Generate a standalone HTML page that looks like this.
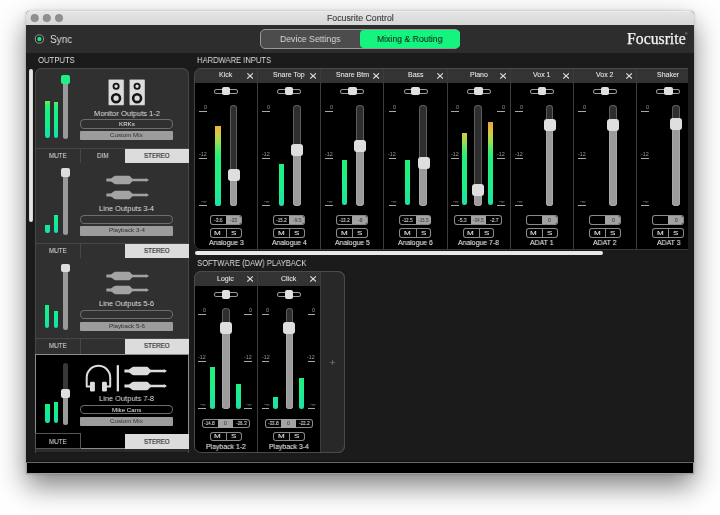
<!DOCTYPE html>
<html><head><meta charset="utf-8"><style>
html,body{margin:0;padding:0;}
body{width:720px;height:515px;position:relative;overflow:hidden;background:#fff;font-family:"Liberation Sans",sans-serif;}
div{position:absolute;box-sizing:border-box;}
.t{white-space:nowrap;will-change:transform;transform-origin:0 0;}
svg{position:absolute;}
</style></head><body>
<div style="left:26.00px;top:11.00px;width:668.00px;height:463.00px;box-shadow:0 12px 28px rgba(0,0,0,0.5), 0 0 3px rgba(0,0,0,0.22);border-radius:4px 4px 0 0;background:#1b1b1b"></div>
<div style="left:26.00px;top:11.00px;width:668.00px;height:13.60px;background:linear-gradient(#f2f2f2 0px,#e4e4e4 1.2px,#d7d7d7 13.6px);border-radius:4px 4px 0 0"></div>
<svg style="left:26px;top:11px" width="50" height="14" viewBox="26 11 50 14"><circle cx="34.7" cy="18.1" r="3.75" fill="#8f8f8f" stroke="#7d7d7d" stroke-width="0.5"/><circle cx="46.8" cy="18.1" r="3.75" fill="#8f8f8f" stroke="#7d7d7d" stroke-width="0.5"/><circle cx="59.0" cy="18.1" r="3.75" fill="#8f8f8f" stroke="#7d7d7d" stroke-width="0.5"/></svg>
<div class="t" style="left:326.80px;top:15.00px;font-size:8.276px;line-height:8.276px;color:#3c3c3c;font-family:'Liberation Sans';transform:scaleX(1.0602);-webkit-text-stroke-width:0.12px">Focusrite Control</div>
<div style="left:26.00px;top:25.00px;width:668.00px;height:27.50px;background:#2d2d2d"></div>
<svg style="left:30px;top:30px" width="20" height="18" viewBox="30 30 20 18"><circle cx="39.4" cy="39" r="4.1" fill="#1c1c1c" stroke="#a8a8a8" stroke-width="0.9"/><circle cx="39.4" cy="39" r="2.2" fill="#1fe47c"/></svg>
<div class="t" style="left:49.75px;top:35.00px;font-size:10.286px;line-height:10.286px;color:#dcdcdc;font-family:'Liberation Sans';transform:scaleX(0.9745);">Sync</div>
<div style="left:260.30px;top:28.90px;width:199.90px;height:20.40px;border-radius:5px;background:#4c4c4c;border:1.1px solid #989898"></div>
<div style="left:360.20px;top:29.70px;width:99.80px;height:18.70px;border-radius:4px;background:#15f47e"></div>
<div class="t" style="left:279.80px;top:35.00px;font-size:9.241px;line-height:9.241px;color:#d8d8d8;font-family:'Liberation Sans';transform:scaleX(0.9420);">Device Settings</div>
<div class="t" style="left:376.81px;top:35.00px;font-size:9.241px;line-height:9.241px;color:#101010;font-family:'Liberation Sans';transform:scaleX(0.9369);">Mixing &amp; Routing</div>
<div class="t" style="left:626.53px;top:31.00px;font-size:15.758px;line-height:15.758px;color:#f4f4f4;font-family:'Liberation Serif';transform:scaleX(0.9987);-webkit-text-stroke:0.25px #f4f4f4">Focusrite</div>
<div class="t" style="left:685.4px;top:33.2px;font-size:3.5px;line-height:3.5px;color:#bbb">&#174;</div>
<div style="left:26.00px;top:52.50px;width:668.00px;height:409.00px;background:#1b1b1b"></div>
<div style="left:26.00px;top:460.60px;width:668.00px;height:0.90px;background:#121212"></div>
<div style="left:26.00px;top:461.50px;width:668.00px;height:1.20px;background:#6a6a6a"></div>
<div style="left:26.00px;top:462.70px;width:668.00px;height:11.80px;background:#000;border:1px solid #a0a0a0;border-top:0"></div>
<div class="t" style="left:37.85px;top:55.00px;font-size:9.571px;line-height:9.571px;color:#dedede;font-family:'Liberation Sans';transform:scaleX(0.8050);">OUTPUTS</div>
<div class="t" style="left:196.79px;top:56.00px;font-size:8.857px;line-height:8.857px;color:#dedede;font-family:'Liberation Sans';transform:scaleX(0.8607);">HARDWARE INPUTS</div>
<div class="t" style="left:196.66px;top:259.00px;font-size:9.310px;line-height:9.310px;color:#dedede;font-family:'Liberation Sans';transform:scaleX(0.8205);">SOFTWARE (DAW) PLAYBACK</div>
<div style="left:29.00px;top:68.70px;width:3.60px;height:153.30px;background:linear-gradient(90deg,#cfcfcf,#eeeeee 50%,#cfcfcf);border-radius:2px"></div>
<div style="left:35.30px;top:68.00px;width:153.70px;height:95.20px;background:#303030;box-shadow:inset 1px 0 0 #474747, inset -1px 0 0 #474747, inset 0 1px 0 #474747;border-radius:7px 7px 0 0;"></div>
<div style="left:63.00px;top:79.00px;width:5.40px;height:60.30px;background:#9a9a9a;border-radius:2.7px"></div>
<div style="left:61.00px;top:75.00px;width:9.00px;height:8.80px;background:#20ee88;border-radius:2px"></div>
<div style="left:45.00px;top:101.00px;width:4.6px;height:36.60px;overflow:hidden;border-radius:0 0 2.3px 2.3px"><div style="left:0;top:0.00px;width:4.6px;height:36.6px;background:linear-gradient(#72ee56 0px,#30f070 4px,#18f082 10px,#14f08a 22px,#16dfb2 36.6px)"></div></div>
<div style="left:53.90px;top:101.80px;width:4.6px;height:35.80px;overflow:hidden;border-radius:0 0 2.3px 2.3px"><div style="left:0;top:-0.80px;width:4.6px;height:36.6px;background:linear-gradient(#72ee56 0px,#30f070 4px,#18f082 10px,#14f08a 22px,#16dfb2 36.6px)"></div></div>
<svg style="left:108.40px;top:78.9px" width="16.4" height="26.7" viewBox="0 0 16.4 26.7"><rect x="0.25" y="0.25" width="15.9" height="26.2" rx="1.2" fill="#dcdcdc" stroke="#222" stroke-width="0.5"/><circle cx="8.1" cy="7.3" r="2.6" fill="#dcdcdc" stroke="#151515" stroke-width="1.85"/><circle cx="8.1" cy="19.2" r="3.95" fill="#dcdcdc" stroke="#151515" stroke-width="2.6"/></svg>
<svg style="left:128.60px;top:78.9px" width="16.4" height="26.7" viewBox="0 0 16.4 26.7"><rect x="0.25" y="0.25" width="15.9" height="26.2" rx="1.2" fill="#dcdcdc" stroke="#222" stroke-width="0.5"/><circle cx="8.1" cy="7.3" r="2.6" fill="#dcdcdc" stroke="#151515" stroke-width="1.85"/><circle cx="8.1" cy="19.2" r="3.95" fill="#dcdcdc" stroke="#151515" stroke-width="2.6"/></svg>
<div class="t" style="left:93.65px;top:110.00px;font-size:7.724px;line-height:7.724px;color:#e0e0e0;font-family:'Liberation Sans';transform:scaleX(0.9652);">Monitor Outputs 1-2</div>
<div style="left:80.30px;top:119.40px;width:92.60px;height:9.20px;border-radius:4.6px;box-shadow:inset 0 0 0 1px #6d6d6d"></div>
<div class="t" style="left:118.61px;top:121.00px;font-size:6.069px;line-height:6.069px;color:#e8e8e8;font-family:'Liberation Sans';transform:scaleX(1.0259);">KRKs</div>
<div style="left:80.30px;top:131.10px;width:92.60px;height:9.30px;background:#9c9c9c;border-radius:1px"></div>
<div class="t" style="left:110.24px;top:132.00px;font-size:6.069px;line-height:6.069px;color:#303030;font-family:'Liberation Sans';transform:scaleX(1.0259);">Custom Mix</div>
<div style="left:35.30px;top:147.60px;width:153.70px;height:1.00px;background:#474747"></div>
<div style="left:80.40px;top:147.60px;width:1.00px;height:15.50px;background:#474747"></div>
<div style="left:125.30px;top:147.60px;width:1.00px;height:15.50px;background:#474747"></div>
<div style="left:35.30px;top:163.10px;width:153.70px;height:1.00px;background:#474747"></div>
<div style="left:125.30px;top:148.60px;width:63.70px;height:14.50px;background:#dcdcdc"></div>
<div class="t" style="left:48.50px;top:152.00px;font-size:7.246px;line-height:7.246px;color:#e2e2e2;font-family:'Liberation Sans';transform:scaleX(0.8657);">MUTE</div>
<div class="t" style="left:96.96px;top:152.00px;font-size:7.246px;line-height:7.246px;color:#e2e2e2;font-family:'Liberation Sans';transform:scaleX(0.8657);">DIM</div>
<div class="t" style="left:143.81px;top:152.00px;font-size:7.246px;line-height:7.246px;color:#1a1a1a;font-family:'Liberation Sans';transform:scaleX(0.8657);-webkit-text-stroke:0.12px #1a1a1a">STEREO</div>
<div style="left:35.30px;top:163.20px;width:153.70px;height:95.20px;background:#303030;box-shadow:inset 1px 0 0 #474747, inset -1px 0 0 #474747;"></div>
<div style="left:63.00px;top:171.00px;width:5.40px;height:63.80px;background:#9a9a9a;border-radius:2.7px"></div>
<div style="left:61.00px;top:168.00px;width:9.00px;height:8.80px;background:#dedede;border-radius:2px"></div>
<div style="left:45.00px;top:225.00px;width:4.6px;height:7.80px;overflow:hidden;border-radius:0 0 2.3px 2.3px"><div style="left:0;top:-28.80px;width:4.6px;height:36.6px;background:linear-gradient(#72ee56 0px,#30f070 4px,#18f082 10px,#14f08a 22px,#16dfb2 36.6px)"></div></div>
<div style="left:53.90px;top:214.70px;width:4.6px;height:18.10px;overflow:hidden;border-radius:0 0 2.3px 2.3px"><div style="left:0;top:-18.50px;width:4.6px;height:36.6px;background:linear-gradient(#72ee56 0px,#30f070 4px,#18f082 10px,#14f08a 22px,#16dfb2 36.6px)"></div></div>
<svg style="left:105.60px;top:175.30px" width="44" height="10" viewBox="0 0 44 10"><path fill="#a3a3a3" d="M0.4 3.5 H4.6 C6.4 3.5 7.4 0.8 9.6 0.8 H23 C24.6 0.8 25.3 3.7 27 3.7 H39.6 L40.2 3.2 L43 5 L40.2 6.8 L39.6 6.3 H27 C25.3 6.3 24.6 9.2 23 9.2 H9.6 C7.4 9.2 6.4 6.5 4.6 6.5 H0.4 Z"/></svg>
<svg style="left:105.60px;top:190.00px" width="44" height="10" viewBox="0 0 44 10"><path fill="#a3a3a3" d="M0.4 3.5 H4.6 C6.4 3.5 7.4 0.8 9.6 0.8 H23 C24.6 0.8 25.3 3.7 27 3.7 H39.6 L40.2 3.2 L43 5 L40.2 6.8 L39.6 6.3 H27 C25.3 6.3 24.6 9.2 23 9.2 H9.6 C7.4 9.2 6.4 6.5 4.6 6.5 H0.4 Z"/></svg>
<div class="t" style="left:98.95px;top:205.00px;font-size:7.724px;line-height:7.724px;color:#e0e0e0;font-family:'Liberation Sans';transform:scaleX(0.9652);">Line Outputs 3-4</div>
<div style="left:80.30px;top:214.60px;width:92.60px;height:9.20px;border-radius:4.6px;box-shadow:inset 0 0 0 1px #6d6d6d"></div>
<div style="left:80.30px;top:226.30px;width:92.60px;height:9.30px;background:#9c9c9c;border-radius:1px"></div>
<div class="t" style="left:108.65px;top:227.00px;font-size:6.069px;line-height:6.069px;color:#303030;font-family:'Liberation Sans';transform:scaleX(1.0259);">Playback 3-4</div>
<div style="left:35.30px;top:242.80px;width:153.70px;height:1.00px;background:#474747"></div>
<div style="left:80.40px;top:242.80px;width:1.00px;height:15.50px;background:#474747"></div>
<div style="left:35.30px;top:258.30px;width:153.70px;height:1.00px;background:#474747"></div>
<div style="left:125.30px;top:243.80px;width:63.70px;height:14.50px;background:#dcdcdc"></div>
<div class="t" style="left:48.50px;top:247.00px;font-size:7.246px;line-height:7.246px;color:#e2e2e2;font-family:'Liberation Sans';transform:scaleX(0.8657);">MUTE</div>
<div class="t" style="left:143.81px;top:247.00px;font-size:7.246px;line-height:7.246px;color:#1a1a1a;font-family:'Liberation Sans';transform:scaleX(0.8657);-webkit-text-stroke:0.12px #1a1a1a">STEREO</div>
<div style="left:35.30px;top:258.40px;width:153.70px;height:95.20px;background:#303030;box-shadow:inset 1px 0 0 #474747, inset -1px 0 0 #474747;"></div>
<div style="left:63.00px;top:266.00px;width:5.40px;height:63.80px;background:#9a9a9a;border-radius:2.7px"></div>
<div style="left:61.00px;top:263.70px;width:9.00px;height:8.80px;background:#dedede;border-radius:2px"></div>
<div style="left:44.90px;top:304.80px;width:4.6px;height:23.20px;overflow:hidden;border-radius:0 0 2.3px 2.3px"><div style="left:0;top:-13.40px;width:4.6px;height:36.6px;background:linear-gradient(#72ee56 0px,#30f070 4px,#18f082 10px,#14f08a 22px,#16dfb2 36.6px)"></div></div>
<div style="left:53.90px;top:310.50px;width:4.6px;height:17.50px;overflow:hidden;border-radius:0 0 2.3px 2.3px"><div style="left:0;top:-19.10px;width:4.6px;height:36.6px;background:linear-gradient(#72ee56 0px,#30f070 4px,#18f082 10px,#14f08a 22px,#16dfb2 36.6px)"></div></div>
<svg style="left:105.60px;top:270.50px" width="44" height="10" viewBox="0 0 44 10"><path fill="#a3a3a3" d="M0.4 3.5 H4.6 C6.4 3.5 7.4 0.8 9.6 0.8 H23 C24.6 0.8 25.3 3.7 27 3.7 H39.6 L40.2 3.2 L43 5 L40.2 6.8 L39.6 6.3 H27 C25.3 6.3 24.6 9.2 23 9.2 H9.6 C7.4 9.2 6.4 6.5 4.6 6.5 H0.4 Z"/></svg>
<svg style="left:105.60px;top:285.20px" width="44" height="10" viewBox="0 0 44 10"><path fill="#a3a3a3" d="M0.4 3.5 H4.6 C6.4 3.5 7.4 0.8 9.6 0.8 H23 C24.6 0.8 25.3 3.7 27 3.7 H39.6 L40.2 3.2 L43 5 L40.2 6.8 L39.6 6.3 H27 C25.3 6.3 24.6 9.2 23 9.2 H9.6 C7.4 9.2 6.4 6.5 4.6 6.5 H0.4 Z"/></svg>
<div class="t" style="left:98.98px;top:300.00px;font-size:7.724px;line-height:7.724px;color:#e0e0e0;font-family:'Liberation Sans';transform:scaleX(0.9652);">Line Outputs 5-6</div>
<div style="left:80.30px;top:309.80px;width:92.60px;height:9.20px;border-radius:4.6px;box-shadow:inset 0 0 0 1px #6d6d6d"></div>
<div style="left:80.30px;top:321.50px;width:92.60px;height:9.30px;background:#9c9c9c;border-radius:1px"></div>
<div class="t" style="left:108.68px;top:323.00px;font-size:6.069px;line-height:6.069px;color:#303030;font-family:'Liberation Sans';transform:scaleX(1.0259);">Playback 5-6</div>
<div style="left:35.30px;top:338.00px;width:153.70px;height:1.00px;background:#474747"></div>
<div style="left:80.40px;top:338.00px;width:1.00px;height:15.50px;background:#474747"></div>
<div style="left:35.30px;top:353.50px;width:153.70px;height:1.00px;background:#474747"></div>
<div style="left:125.30px;top:339.00px;width:63.70px;height:14.50px;background:#dcdcdc"></div>
<div class="t" style="left:48.50px;top:342.00px;font-size:7.246px;line-height:7.246px;color:#e2e2e2;font-family:'Liberation Sans';transform:scaleX(0.8657);">MUTE</div>
<div class="t" style="left:143.81px;top:342.00px;font-size:7.246px;line-height:7.246px;color:#1a1a1a;font-family:'Liberation Sans';transform:scaleX(0.8657);-webkit-text-stroke:0.12px #1a1a1a">STEREO</div>
<div style="left:35.30px;top:353.80px;width:153.70px;height:94.90px;background:#000;box-shadow:inset 0 0 0 1px #8d8d8d"></div>
<div style="left:63.00px;top:362.70px;width:5.40px;height:62.60px;background:#383838;border-radius:2.7px"></div>
<div style="left:63.00px;top:393.40px;width:5.40px;height:31.90px;background:#9a9a9a;border-radius:0 0 2.7px 2.7px"></div>
<div style="left:61.00px;top:389.40px;width:9.00px;height:8.80px;background:#dedede;border-radius:2px"></div>
<div style="left:45.00px;top:404.00px;width:4.6px;height:19.40px;overflow:hidden;border-radius:0 0 2.3px 2.3px"><div style="left:0;top:-17.20px;width:4.6px;height:36.6px;background:linear-gradient(#72ee56 0px,#30f070 4px,#18f082 10px,#14f08a 22px,#16dfb2 36.6px)"></div></div>
<div style="left:53.90px;top:402.40px;width:4.6px;height:21.00px;overflow:hidden;border-radius:0 0 2.3px 2.3px"><div style="left:0;top:-15.60px;width:4.6px;height:36.6px;background:linear-gradient(#72ee56 0px,#30f070 4px,#18f082 10px,#14f08a 22px,#16dfb2 36.6px)"></div></div>
<svg style="left:80px;top:360px" width="45" height="35" viewBox="80 360 45 35"><path d="M86.7 386.4 V377.5 A11.75 11.75 0 0 1 110.2 377.5 V386.4 M86 386.4 H91 M111 386.4 H106" fill="none" stroke="#dcdcdc" stroke-width="2"/><rect x="90" y="381.7" width="4.9" height="9.9" rx="1.3" fill="#dcdcdc"/><rect x="102" y="381.7" width="4.9" height="9.9" rx="1.3" fill="#dcdcdc"/><rect x="116.7" y="365.1" width="2.3" height="26.5" rx="1" fill="#dcdcdc"/></svg>
<svg style="left:124.40px;top:366.10px" width="44" height="10" viewBox="0 0 44 10"><path fill="#dcdcdc" d="M0.4 3.5 H4.6 C6.4 3.5 7.4 0.8 9.6 0.8 H23 C24.6 0.8 25.3 3.7 27 3.7 H39.6 L40.2 3.2 L43 5 L40.2 6.8 L39.6 6.3 H27 C25.3 6.3 24.6 9.2 23 9.2 H9.6 C7.4 9.2 6.4 6.5 4.6 6.5 H0.4 Z"/></svg>
<svg style="left:124.40px;top:380.70px" width="44" height="10" viewBox="0 0 44 10"><path fill="#dcdcdc" d="M0.4 3.5 H4.6 C6.4 3.5 7.4 0.8 9.6 0.8 H23 C24.6 0.8 25.3 3.7 27 3.7 H39.6 L40.2 3.2 L43 5 L40.2 6.8 L39.6 6.3 H27 C25.3 6.3 24.6 9.2 23 9.2 H9.6 C7.4 9.2 6.4 6.5 4.6 6.5 H0.4 Z"/></svg>
<div class="t" style="left:98.98px;top:395.00px;font-size:7.724px;line-height:7.724px;color:#e0e0e0;font-family:'Liberation Sans';transform:scaleX(0.9652);">Line Outputs 7-8</div>
<div style="left:80.30px;top:405.20px;width:92.60px;height:9.20px;border-radius:4.6px;box-shadow:inset 0 0 0 1px #6d6d6d"></div>
<div class="t" style="left:111.85px;top:407.00px;font-size:6.069px;line-height:6.069px;color:#e8e8e8;font-family:'Liberation Sans';transform:scaleX(1.0259);">Mike Cans</div>
<div style="left:80.30px;top:416.90px;width:92.60px;height:9.30px;background:#9c9c9c;border-radius:1px"></div>
<div class="t" style="left:110.24px;top:418.00px;font-size:6.069px;line-height:6.069px;color:#303030;font-family:'Liberation Sans';transform:scaleX(1.0259);">Custom Mix</div>
<div style="left:35.30px;top:433.40px;width:45.50px;height:15.70px;box-shadow:inset 0 0 0 1px #555"></div>
<div style="left:125.30px;top:433.70px;width:63.70px;height:15.20px;background:#dcdcdc"></div>
<div class="t" style="left:48.50px;top:438.00px;font-size:7.246px;line-height:7.246px;color:#e2e2e2;font-family:'Liberation Sans';transform:scaleX(0.8657);">MUTE</div>
<div class="t" style="left:143.81px;top:438.00px;font-size:7.246px;line-height:7.246px;color:#1a1a1a;font-family:'Liberation Sans';transform:scaleX(0.8657);-webkit-text-stroke:0.12px #1a1a1a">STEREO</div>
<div style="left:35.30px;top:449.30px;width:153.70px;height:3.40px;background:#2c2c2c;box-shadow:inset 1px 0 0 #474747, inset -1px 0 0 #474747, inset 0 -0.8px 0 #111"></div>
<div style="left:0;top:0;width:720px;height:515px;clip-path:inset(67.8px 32px 265.2px 194.1px round 7px 0 0 7px)">
<div style="left:194.30px;top:67.80px;width:63.20px;height:14.90px;background:#333"></div>
<div class="t" style="left:218.99px;top:72.00px;font-size:6.897px;line-height:6.897px;color:#e4e4e4;font-family:'Liberation Sans';transform:scaleX(1.0174);-webkit-text-stroke-width:0.08px">Kick</div>
<svg style="left:246.90px;top:72.90px" width="6.3" height="5.8" viewBox="0 0 6.3 5.8"><path d="M0.3 0.3 L6 5.5 M6 0.3 L0.3 5.5" stroke="#e0e0e0" stroke-width="1.05"/></svg>
<div style="left:194.30px;top:82.50px;width:63.20px;height:167.50px;background:#000"></div>
<div style="left:213.90px;top:88.60px;width:24.00px;height:5.10px;border-radius:2.55px;box-shadow:inset 0 0 0 0.9px #9a9a9a"></div>
<div style="left:221.60px;top:86.80px;width:8.60px;height:8.40px;background:#e0e0e0;border-radius:2px"></div>
<div style="left:198.90px;top:110.85px;width:7.80px;height:0.90px;background:#a8a8a8"></div>
<div class="t" style="left:203.59px;top:106.00px;font-size:4.429px;line-height:4.429px;color:#9a9a9a;font-family:'Liberation Sans';transform:scaleX(1.2210);-webkit-text-stroke-width:0">0</div>
<div style="left:198.90px;top:157.95px;width:7.80px;height:0.90px;background:#a8a8a8"></div>
<div class="t" style="left:198.86px;top:153.00px;font-size:4.429px;line-height:4.429px;color:#9a9a9a;font-family:'Liberation Sans';transform:scaleX(1.2210);-webkit-text-stroke-width:0">-12</div>
<div style="left:198.90px;top:205.05px;width:7.80px;height:0.90px;background:#a8a8a8"></div>
<div class="t" style="left:200.97px;top:200.00px;font-size:4.429px;line-height:4.429px;color:#9a9a9a;font-family:'Liberation Sans';transform:scaleX(1.2210);-webkit-text-stroke-width:0">-∞</div>
<div style="left:229.80px;top:104.60px;width:7.50px;height:101.40px;background:#2e2e2e;border-radius:3.75px;box-shadow:inset 0 0 0 1px #5c5c5c"></div>
<div style="left:229.80px;top:175.20px;width:7.50px;height:30.80px;background:#9b9b9b;border-radius:0 0 3.75px 3.75px;box-shadow:inset 0 0 0 0.8px #ababab"></div>
<div style="left:215.40px;top:126.00px;width:5.3px;height:79.50px;overflow:hidden;border-radius:0 0 2.6px 2.6px"><div style="left:0;top:-4.50px;width:5.3px;height:84px;background:linear-gradient(#efa03c 0px,#e8b43e 5px,#d2cc44 12px,#9ade52 20px,#48ec6c 28px,#22f07c 36px,#1ef08a 64px,#1ee0a8 84px)"></div></div>
<div style="left:228.00px;top:169.20px;width:12.00px;height:12.00px;background:#dedede;border-radius:3px"></div>
<div style="left:209.70px;top:215.30px;width:31.90px;height:9.60px;border-radius:3px;box-shadow:inset 0 0 0 1px #8a8a8a"></div>
<div class="t" style="left:213.54px;top:218.00px;font-size:5.200px;line-height:5.200px;color:#dcdcdc;font-family:'Liberation Sans';transform:scaleX(0.9500);-webkit-text-stroke-width:0.1px">-3.6</div>
<div style="left:225.90px;top:216.00px;width:15.00px;height:8.20px;background:#a3a3a3;border-radius:0 2.5px 2.5px 0"></div>
<div class="t" style="left:230.17px;top:218.00px;font-size:5.200px;line-height:5.200px;color:#454545;font-family:'Liberation Sans';transform:scaleX(0.9500);-webkit-text-stroke-width:0.1px">-23</div>
<div style="left:209.70px;top:228.30px;width:31.90px;height:9.30px;border-radius:3px;box-shadow:inset 0 0 0 1px #8a8a8a"></div>
<div style="left:225.90px;top:228.30px;width:0.90px;height:9.30px;background:#8a8a8a"></div>
<div class="t" style="left:214.46px;top:231.00px;font-size:5.942px;line-height:5.942px;color:#e6e6e6;font-family:'Liberation Sans';transform:scaleX(1.3564);-webkit-text-stroke-width:0.05px">M</div>
<div class="t" style="left:231.02px;top:231.00px;font-size:5.942px;line-height:5.942px;color:#e6e6e6;font-family:'Liberation Sans';transform:scaleX(1.3564);-webkit-text-stroke-width:0.05px">S</div>
<div class="t" style="left:208.55px;top:239.00px;font-size:7.310px;line-height:7.310px;color:#e6e6e6;font-family:'Liberation Sans';transform:scaleX(0.9456);-webkit-text-stroke-width:0.08px">Analogue 3</div>
<div style="left:257.50px;top:67.80px;width:63.20px;height:14.90px;background:#333"></div>
<div class="t" style="left:273.15px;top:72.00px;font-size:6.897px;line-height:6.897px;color:#e4e4e4;font-family:'Liberation Sans';transform:scaleX(1.0174);-webkit-text-stroke-width:0.08px">Snare Top</div>
<svg style="left:310.10px;top:72.90px" width="6.3" height="5.8" viewBox="0 0 6.3 5.8"><path d="M0.3 0.3 L6 5.5 M6 0.3 L0.3 5.5" stroke="#e0e0e0" stroke-width="1.05"/></svg>
<div style="left:257.50px;top:82.50px;width:63.20px;height:167.50px;background:#000"></div>
<div style="left:277.10px;top:88.60px;width:24.00px;height:5.10px;border-radius:2.55px;box-shadow:inset 0 0 0 0.9px #9a9a9a"></div>
<div style="left:284.80px;top:86.80px;width:8.60px;height:8.40px;background:#e0e0e0;border-radius:2px"></div>
<div style="left:262.10px;top:110.85px;width:7.80px;height:0.90px;background:#a8a8a8"></div>
<div class="t" style="left:266.79px;top:106.00px;font-size:4.429px;line-height:4.429px;color:#9a9a9a;font-family:'Liberation Sans';transform:scaleX(1.2210);-webkit-text-stroke-width:0">0</div>
<div style="left:262.10px;top:157.95px;width:7.80px;height:0.90px;background:#a8a8a8"></div>
<div class="t" style="left:262.06px;top:153.00px;font-size:4.429px;line-height:4.429px;color:#9a9a9a;font-family:'Liberation Sans';transform:scaleX(1.2210);-webkit-text-stroke-width:0">-12</div>
<div style="left:262.10px;top:205.05px;width:7.80px;height:0.90px;background:#a8a8a8"></div>
<div class="t" style="left:264.17px;top:200.00px;font-size:4.429px;line-height:4.429px;color:#9a9a9a;font-family:'Liberation Sans';transform:scaleX(1.2210);-webkit-text-stroke-width:0">-∞</div>
<div style="left:293.00px;top:104.60px;width:7.50px;height:101.40px;background:#2e2e2e;border-radius:3.75px;box-shadow:inset 0 0 0 1px #5c5c5c"></div>
<div style="left:293.00px;top:150.00px;width:7.50px;height:56.00px;background:#9b9b9b;border-radius:0 0 3.75px 3.75px;box-shadow:inset 0 0 0 0.8px #ababab"></div>
<div style="left:278.60px;top:164.00px;width:5.3px;height:41.50px;overflow:hidden;border-radius:0 0 2.6px 2.6px"><div style="left:0;top:-42.50px;width:5.3px;height:84px;background:linear-gradient(#efa03c 0px,#e8b43e 5px,#d2cc44 12px,#9ade52 20px,#48ec6c 28px,#22f07c 36px,#1ef08a 64px,#1ee0a8 84px)"></div></div>
<div style="left:291.20px;top:144.00px;width:12.00px;height:12.00px;background:#dedede;border-radius:3px"></div>
<div style="left:272.90px;top:215.30px;width:31.90px;height:9.60px;border-radius:3px;box-shadow:inset 0 0 0 1px #8a8a8a"></div>
<div class="t" style="left:275.69px;top:218.00px;font-size:5.200px;line-height:5.200px;color:#dcdcdc;font-family:'Liberation Sans';transform:scaleX(0.8977);-webkit-text-stroke-width:0.1px">-15.2</div>
<div style="left:289.10px;top:216.00px;width:15.00px;height:8.20px;background:#a3a3a3;border-radius:0 2.5px 2.5px 0"></div>
<div class="t" style="left:292.69px;top:218.00px;font-size:5.200px;line-height:5.200px;color:#454545;font-family:'Liberation Sans';transform:scaleX(0.9500);-webkit-text-stroke-width:0.1px">-9.5</div>
<div style="left:272.90px;top:228.30px;width:31.90px;height:9.30px;border-radius:3px;box-shadow:inset 0 0 0 1px #8a8a8a"></div>
<div style="left:289.10px;top:228.30px;width:0.90px;height:9.30px;background:#8a8a8a"></div>
<div class="t" style="left:277.66px;top:231.00px;font-size:5.942px;line-height:5.942px;color:#e6e6e6;font-family:'Liberation Sans';transform:scaleX(1.3564);-webkit-text-stroke-width:0.05px">M</div>
<div class="t" style="left:294.22px;top:231.00px;font-size:5.942px;line-height:5.942px;color:#e6e6e6;font-family:'Liberation Sans';transform:scaleX(1.3564);-webkit-text-stroke-width:0.05px">S</div>
<div class="t" style="left:271.72px;top:239.00px;font-size:7.310px;line-height:7.310px;color:#e6e6e6;font-family:'Liberation Sans';transform:scaleX(0.9456);-webkit-text-stroke-width:0.08px">Analogue 4</div>
<div style="left:320.70px;top:67.80px;width:63.20px;height:14.90px;background:#333"></div>
<div class="t" style="left:335.79px;top:72.00px;font-size:6.897px;line-height:6.897px;color:#e4e4e4;font-family:'Liberation Sans';transform:scaleX(1.0174);-webkit-text-stroke-width:0.08px">Snare Btm</div>
<svg style="left:373.30px;top:72.90px" width="6.3" height="5.8" viewBox="0 0 6.3 5.8"><path d="M0.3 0.3 L6 5.5 M6 0.3 L0.3 5.5" stroke="#e0e0e0" stroke-width="1.05"/></svg>
<div style="left:320.70px;top:82.50px;width:63.20px;height:167.50px;background:#000"></div>
<div style="left:340.30px;top:88.60px;width:24.00px;height:5.10px;border-radius:2.55px;box-shadow:inset 0 0 0 0.9px #9a9a9a"></div>
<div style="left:348.00px;top:86.80px;width:8.60px;height:8.40px;background:#e0e0e0;border-radius:2px"></div>
<div style="left:325.30px;top:110.85px;width:7.80px;height:0.90px;background:#a8a8a8"></div>
<div class="t" style="left:329.99px;top:106.00px;font-size:4.429px;line-height:4.429px;color:#9a9a9a;font-family:'Liberation Sans';transform:scaleX(1.2210);-webkit-text-stroke-width:0">0</div>
<div style="left:325.30px;top:157.95px;width:7.80px;height:0.90px;background:#a8a8a8"></div>
<div class="t" style="left:325.26px;top:153.00px;font-size:4.429px;line-height:4.429px;color:#9a9a9a;font-family:'Liberation Sans';transform:scaleX(1.2210);-webkit-text-stroke-width:0">-12</div>
<div style="left:325.30px;top:205.05px;width:7.80px;height:0.90px;background:#a8a8a8"></div>
<div class="t" style="left:327.37px;top:200.00px;font-size:4.429px;line-height:4.429px;color:#9a9a9a;font-family:'Liberation Sans';transform:scaleX(1.2210);-webkit-text-stroke-width:0">-∞</div>
<div style="left:356.20px;top:104.60px;width:7.50px;height:101.40px;background:#2e2e2e;border-radius:3.75px;box-shadow:inset 0 0 0 1px #5c5c5c"></div>
<div style="left:356.20px;top:146.00px;width:7.50px;height:60.00px;background:#9b9b9b;border-radius:0 0 3.75px 3.75px;box-shadow:inset 0 0 0 0.8px #ababab"></div>
<div style="left:341.80px;top:160.20px;width:5.3px;height:45.30px;overflow:hidden;border-radius:0 0 2.6px 2.6px"><div style="left:0;top:-38.70px;width:5.3px;height:84px;background:linear-gradient(#efa03c 0px,#e8b43e 5px,#d2cc44 12px,#9ade52 20px,#48ec6c 28px,#22f07c 36px,#1ef08a 64px,#1ee0a8 84px)"></div></div>
<div style="left:354.40px;top:140.00px;width:12.00px;height:12.00px;background:#dedede;border-radius:3px"></div>
<div style="left:336.10px;top:215.30px;width:31.90px;height:9.60px;border-radius:3px;box-shadow:inset 0 0 0 1px #8a8a8a"></div>
<div class="t" style="left:338.89px;top:218.00px;font-size:5.200px;line-height:5.200px;color:#dcdcdc;font-family:'Liberation Sans';transform:scaleX(0.8977);-webkit-text-stroke-width:0.1px">-13.2</div>
<div style="left:352.30px;top:216.00px;width:15.00px;height:8.20px;background:#a3a3a3;border-radius:0 2.5px 2.5px 0"></div>
<div class="t" style="left:357.94px;top:218.00px;font-size:5.200px;line-height:5.200px;color:#454545;font-family:'Liberation Sans';transform:scaleX(0.9500);-webkit-text-stroke-width:0.1px">-8</div>
<div style="left:336.10px;top:228.30px;width:31.90px;height:9.30px;border-radius:3px;box-shadow:inset 0 0 0 1px #8a8a8a"></div>
<div style="left:352.30px;top:228.30px;width:0.90px;height:9.30px;background:#8a8a8a"></div>
<div class="t" style="left:340.86px;top:231.00px;font-size:5.942px;line-height:5.942px;color:#e6e6e6;font-family:'Liberation Sans';transform:scaleX(1.3564);-webkit-text-stroke-width:0.05px">M</div>
<div class="t" style="left:357.42px;top:231.00px;font-size:5.942px;line-height:5.942px;color:#e6e6e6;font-family:'Liberation Sans';transform:scaleX(1.3564);-webkit-text-stroke-width:0.05px">S</div>
<div class="t" style="left:334.95px;top:239.00px;font-size:7.310px;line-height:7.310px;color:#e6e6e6;font-family:'Liberation Sans';transform:scaleX(0.9456);-webkit-text-stroke-width:0.08px">Analogue 5</div>
<div style="left:383.90px;top:67.80px;width:63.20px;height:14.90px;background:#333"></div>
<div class="t" style="left:407.54px;top:72.00px;font-size:6.897px;line-height:6.897px;color:#e4e4e4;font-family:'Liberation Sans';transform:scaleX(1.0174);-webkit-text-stroke-width:0.08px">Bass</div>
<svg style="left:436.50px;top:72.90px" width="6.3" height="5.8" viewBox="0 0 6.3 5.8"><path d="M0.3 0.3 L6 5.5 M6 0.3 L0.3 5.5" stroke="#e0e0e0" stroke-width="1.05"/></svg>
<div style="left:383.90px;top:82.50px;width:63.20px;height:167.50px;background:#000"></div>
<div style="left:403.50px;top:88.60px;width:24.00px;height:5.10px;border-radius:2.55px;box-shadow:inset 0 0 0 0.9px #9a9a9a"></div>
<div style="left:411.20px;top:86.80px;width:8.60px;height:8.40px;background:#e0e0e0;border-radius:2px"></div>
<div style="left:388.50px;top:110.85px;width:7.80px;height:0.90px;background:#a8a8a8"></div>
<div class="t" style="left:393.19px;top:106.00px;font-size:4.429px;line-height:4.429px;color:#9a9a9a;font-family:'Liberation Sans';transform:scaleX(1.2210);-webkit-text-stroke-width:0">0</div>
<div style="left:388.50px;top:157.95px;width:7.80px;height:0.90px;background:#a8a8a8"></div>
<div class="t" style="left:388.46px;top:153.00px;font-size:4.429px;line-height:4.429px;color:#9a9a9a;font-family:'Liberation Sans';transform:scaleX(1.2210);-webkit-text-stroke-width:0">-12</div>
<div style="left:388.50px;top:205.05px;width:7.80px;height:0.90px;background:#a8a8a8"></div>
<div class="t" style="left:390.57px;top:200.00px;font-size:4.429px;line-height:4.429px;color:#9a9a9a;font-family:'Liberation Sans';transform:scaleX(1.2210);-webkit-text-stroke-width:0">-∞</div>
<div style="left:419.40px;top:104.60px;width:7.50px;height:101.40px;background:#2e2e2e;border-radius:3.75px;box-shadow:inset 0 0 0 1px #5c5c5c"></div>
<div style="left:419.40px;top:162.50px;width:7.50px;height:43.50px;background:#9b9b9b;border-radius:0 0 3.75px 3.75px;box-shadow:inset 0 0 0 0.8px #ababab"></div>
<div style="left:405.00px;top:159.80px;width:5.3px;height:45.70px;overflow:hidden;border-radius:0 0 2.6px 2.6px"><div style="left:0;top:-38.30px;width:5.3px;height:84px;background:linear-gradient(#efa03c 0px,#e8b43e 5px,#d2cc44 12px,#9ade52 20px,#48ec6c 28px,#22f07c 36px,#1ef08a 64px,#1ee0a8 84px)"></div></div>
<div style="left:417.60px;top:156.50px;width:12.00px;height:12.00px;background:#dedede;border-radius:3px"></div>
<div style="left:399.30px;top:215.30px;width:31.90px;height:9.60px;border-radius:3px;box-shadow:inset 0 0 0 1px #8a8a8a"></div>
<div class="t" style="left:402.09px;top:218.00px;font-size:5.200px;line-height:5.200px;color:#dcdcdc;font-family:'Liberation Sans';transform:scaleX(0.8936);-webkit-text-stroke-width:0.1px">-12.5</div>
<div style="left:415.50px;top:216.00px;width:15.00px;height:8.20px;background:#a3a3a3;border-radius:0 2.5px 2.5px 0"></div>
<div class="t" style="left:418.04px;top:218.00px;font-size:5.200px;line-height:5.200px;color:#454545;font-family:'Liberation Sans';transform:scaleX(0.8936);-webkit-text-stroke-width:0.1px">-15.5</div>
<div style="left:399.30px;top:228.30px;width:31.90px;height:9.30px;border-radius:3px;box-shadow:inset 0 0 0 1px #8a8a8a"></div>
<div style="left:415.50px;top:228.30px;width:0.90px;height:9.30px;background:#8a8a8a"></div>
<div class="t" style="left:404.06px;top:231.00px;font-size:5.942px;line-height:5.942px;color:#e6e6e6;font-family:'Liberation Sans';transform:scaleX(1.3564);-webkit-text-stroke-width:0.05px">M</div>
<div class="t" style="left:420.62px;top:231.00px;font-size:5.942px;line-height:5.942px;color:#e6e6e6;font-family:'Liberation Sans';transform:scaleX(1.3564);-webkit-text-stroke-width:0.05px">S</div>
<div class="t" style="left:398.15px;top:239.00px;font-size:7.310px;line-height:7.310px;color:#e6e6e6;font-family:'Liberation Sans';transform:scaleX(0.9456);-webkit-text-stroke-width:0.08px">Analogue 6</div>
<div style="left:447.10px;top:67.80px;width:63.20px;height:14.90px;background:#333"></div>
<div class="t" style="left:469.60px;top:72.00px;font-size:6.897px;line-height:6.897px;color:#e4e4e4;font-family:'Liberation Sans';transform:scaleX(1.0174);-webkit-text-stroke-width:0.08px">Piano</div>
<svg style="left:499.70px;top:72.90px" width="6.3" height="5.8" viewBox="0 0 6.3 5.8"><path d="M0.3 0.3 L6 5.5 M6 0.3 L0.3 5.5" stroke="#e0e0e0" stroke-width="1.05"/></svg>
<div style="left:447.10px;top:82.50px;width:63.20px;height:167.50px;background:#000"></div>
<div style="left:466.70px;top:88.60px;width:24.00px;height:5.10px;border-radius:2.55px;box-shadow:inset 0 0 0 0.9px #9a9a9a"></div>
<div style="left:474.40px;top:86.80px;width:8.60px;height:8.40px;background:#e0e0e0;border-radius:2px"></div>
<div style="left:451.20px;top:110.85px;width:7.80px;height:0.90px;background:#a8a8a8"></div>
<div class="t" style="left:455.89px;top:106.00px;font-size:4.429px;line-height:4.429px;color:#9a9a9a;font-family:'Liberation Sans';transform:scaleX(1.2210);-webkit-text-stroke-width:0">0</div>
<div style="left:451.20px;top:157.95px;width:7.80px;height:0.90px;background:#a8a8a8"></div>
<div class="t" style="left:451.16px;top:153.00px;font-size:4.429px;line-height:4.429px;color:#9a9a9a;font-family:'Liberation Sans';transform:scaleX(1.2210);-webkit-text-stroke-width:0">-12</div>
<div style="left:451.20px;top:205.05px;width:7.80px;height:0.90px;background:#a8a8a8"></div>
<div class="t" style="left:453.27px;top:200.00px;font-size:4.429px;line-height:4.429px;color:#9a9a9a;font-family:'Liberation Sans';transform:scaleX(1.2210);-webkit-text-stroke-width:0">-∞</div>
<div style="left:497.10px;top:110.85px;width:7.80px;height:0.90px;background:#a8a8a8"></div>
<div class="t" style="left:501.79px;top:106.00px;font-size:4.429px;line-height:4.429px;color:#9a9a9a;font-family:'Liberation Sans';transform:scaleX(1.2210);-webkit-text-stroke-width:0">0</div>
<div style="left:497.10px;top:157.95px;width:7.80px;height:0.90px;background:#a8a8a8"></div>
<div class="t" style="left:497.06px;top:153.00px;font-size:4.429px;line-height:4.429px;color:#9a9a9a;font-family:'Liberation Sans';transform:scaleX(1.2210);-webkit-text-stroke-width:0">-12</div>
<div style="left:497.10px;top:205.05px;width:7.80px;height:0.90px;background:#a8a8a8"></div>
<div class="t" style="left:499.17px;top:200.00px;font-size:4.429px;line-height:4.429px;color:#9a9a9a;font-family:'Liberation Sans';transform:scaleX(1.2210);-webkit-text-stroke-width:0">-∞</div>
<div style="left:474.00px;top:104.60px;width:7.50px;height:101.40px;background:#2e2e2e;border-radius:3.75px;box-shadow:inset 0 0 0 1px #5c5c5c"></div>
<div style="left:474.00px;top:189.60px;width:7.50px;height:16.40px;background:#9b9b9b;border-radius:0 0 3.75px 3.75px;box-shadow:inset 0 0 0 0.8px #ababab"></div>
<div style="left:462.20px;top:132.60px;width:5.3px;height:72.90px;overflow:hidden;border-radius:0 0 2.6px 2.6px"><div style="left:0;top:-11.10px;width:5.3px;height:84px;background:linear-gradient(#efa03c 0px,#e8b43e 5px,#d2cc44 12px,#9ade52 20px,#48ec6c 28px,#22f07c 36px,#1ef08a 64px,#1ee0a8 84px)"></div></div>
<div style="left:487.50px;top:121.70px;width:5.3px;height:83.80px;overflow:hidden;border-radius:0 0 2.6px 2.6px"><div style="left:0;top:-0.20px;width:5.3px;height:84px;background:linear-gradient(#efa03c 0px,#e8b43e 5px,#d2cc44 12px,#9ade52 20px,#48ec6c 28px,#22f07c 36px,#1ef08a 64px,#1ee0a8 84px)"></div></div>
<div style="left:471.70px;top:183.60px;width:12.00px;height:12.00px;background:#dedede;border-radius:3px"></div>
<div style="left:454.30px;top:215.30px;width:48.00px;height:9.60px;border-radius:3px;box-shadow:inset 0 0 0 1px #8a8a8a"></div>
<div class="t" style="left:458.19px;top:218.00px;font-size:5.200px;line-height:5.200px;color:#dcdcdc;font-family:'Liberation Sans';transform:scaleX(0.9500);-webkit-text-stroke-width:0.1px">-5.3</div>
<div style="left:470.60px;top:216.00px;width:15.30px;height:8.20px;background:#a3a3a3"></div>
<div class="t" style="left:472.94px;top:218.00px;font-size:5.200px;line-height:5.200px;color:#454545;font-family:'Liberation Sans';transform:scaleX(0.8936);-webkit-text-stroke-width:0.1px">-34.5</div>
<div class="t" style="left:489.86px;top:218.00px;font-size:5.200px;line-height:5.200px;color:#dcdcdc;font-family:'Liberation Sans';transform:scaleX(0.9500);-webkit-text-stroke-width:0.1px">-2.7</div>
<div style="left:462.50px;top:228.30px;width:31.90px;height:9.30px;border-radius:3px;box-shadow:inset 0 0 0 1px #8a8a8a"></div>
<div style="left:478.70px;top:228.30px;width:0.90px;height:9.30px;background:#8a8a8a"></div>
<div class="t" style="left:467.26px;top:231.00px;font-size:5.942px;line-height:5.942px;color:#e6e6e6;font-family:'Liberation Sans';transform:scaleX(1.3564);-webkit-text-stroke-width:0.05px">M</div>
<div class="t" style="left:483.82px;top:231.00px;font-size:5.942px;line-height:5.942px;color:#e6e6e6;font-family:'Liberation Sans';transform:scaleX(1.3564);-webkit-text-stroke-width:0.05px">S</div>
<div class="t" style="left:458.27px;top:239.00px;font-size:7.310px;line-height:7.310px;color:#e6e6e6;font-family:'Liberation Sans';transform:scaleX(0.9456);-webkit-text-stroke-width:0.08px">Analogue 7-8</div>
<div style="left:510.30px;top:67.80px;width:63.20px;height:14.90px;background:#333"></div>
<div class="t" style="left:533.27px;top:72.00px;font-size:6.897px;line-height:6.897px;color:#e4e4e4;font-family:'Liberation Sans';transform:scaleX(1.0174);-webkit-text-stroke-width:0.08px">Vox 1</div>
<svg style="left:562.90px;top:72.90px" width="6.3" height="5.8" viewBox="0 0 6.3 5.8"><path d="M0.3 0.3 L6 5.5 M6 0.3 L0.3 5.5" stroke="#e0e0e0" stroke-width="1.05"/></svg>
<div style="left:510.30px;top:82.50px;width:63.20px;height:167.50px;background:#000"></div>
<div style="left:529.90px;top:88.60px;width:24.00px;height:5.10px;border-radius:2.55px;box-shadow:inset 0 0 0 0.9px #9a9a9a"></div>
<div style="left:537.60px;top:86.80px;width:8.60px;height:8.40px;background:#e0e0e0;border-radius:2px"></div>
<div style="left:514.90px;top:110.85px;width:7.80px;height:0.90px;background:#a8a8a8"></div>
<div class="t" style="left:519.59px;top:106.00px;font-size:4.429px;line-height:4.429px;color:#9a9a9a;font-family:'Liberation Sans';transform:scaleX(1.2210);-webkit-text-stroke-width:0">0</div>
<div style="left:514.90px;top:157.95px;width:7.80px;height:0.90px;background:#a8a8a8"></div>
<div class="t" style="left:514.86px;top:153.00px;font-size:4.429px;line-height:4.429px;color:#9a9a9a;font-family:'Liberation Sans';transform:scaleX(1.2210);-webkit-text-stroke-width:0">-12</div>
<div style="left:514.90px;top:205.05px;width:7.80px;height:0.90px;background:#a8a8a8"></div>
<div class="t" style="left:516.97px;top:200.00px;font-size:4.429px;line-height:4.429px;color:#9a9a9a;font-family:'Liberation Sans';transform:scaleX(1.2210);-webkit-text-stroke-width:0">-∞</div>
<div style="left:545.80px;top:104.60px;width:7.50px;height:101.40px;background:#2e2e2e;border-radius:3.75px;box-shadow:inset 0 0 0 1px #5c5c5c"></div>
<div style="left:545.80px;top:124.60px;width:7.50px;height:81.40px;background:#9b9b9b;border-radius:0 0 3.75px 3.75px;box-shadow:inset 0 0 0 0.8px #ababab"></div>
<div style="left:544.00px;top:118.60px;width:12.00px;height:12.00px;background:#dedede;border-radius:3px"></div>
<div style="left:525.70px;top:215.30px;width:31.90px;height:9.60px;border-radius:3px;box-shadow:inset 0 0 0 1px #8a8a8a"></div>
<div style="left:541.90px;top:216.00px;width:15.00px;height:8.20px;background:#a3a3a3;border-radius:0 2.5px 2.5px 0"></div>
<div class="t" style="left:548.37px;top:218.00px;font-size:5.200px;line-height:5.200px;color:#454545;font-family:'Liberation Sans';transform:scaleX(0.9500);-webkit-text-stroke-width:0.1px">0</div>
<div style="left:525.70px;top:228.30px;width:31.90px;height:9.30px;border-radius:3px;box-shadow:inset 0 0 0 1px #8a8a8a"></div>
<div style="left:541.90px;top:228.30px;width:0.90px;height:9.30px;background:#8a8a8a"></div>
<div class="t" style="left:530.46px;top:231.00px;font-size:5.942px;line-height:5.942px;color:#e6e6e6;font-family:'Liberation Sans';transform:scaleX(1.3564);-webkit-text-stroke-width:0.05px">M</div>
<div class="t" style="left:547.02px;top:231.00px;font-size:5.942px;line-height:5.942px;color:#e6e6e6;font-family:'Liberation Sans';transform:scaleX(1.3564);-webkit-text-stroke-width:0.05px">S</div>
<div class="t" style="left:530.27px;top:239.00px;font-size:7.310px;line-height:7.310px;color:#e6e6e6;font-family:'Liberation Sans';transform:scaleX(0.9456);-webkit-text-stroke-width:0.08px">ADAT 1</div>
<div style="left:573.50px;top:67.80px;width:63.20px;height:14.90px;background:#333"></div>
<div class="t" style="left:596.49px;top:72.00px;font-size:6.897px;line-height:6.897px;color:#e4e4e4;font-family:'Liberation Sans';transform:scaleX(1.0174);-webkit-text-stroke-width:0.08px">Vox 2</div>
<svg style="left:626.10px;top:72.90px" width="6.3" height="5.8" viewBox="0 0 6.3 5.8"><path d="M0.3 0.3 L6 5.5 M6 0.3 L0.3 5.5" stroke="#e0e0e0" stroke-width="1.05"/></svg>
<div style="left:573.50px;top:82.50px;width:63.20px;height:167.50px;background:#000"></div>
<div style="left:593.10px;top:88.60px;width:24.00px;height:5.10px;border-radius:2.55px;box-shadow:inset 0 0 0 0.9px #9a9a9a"></div>
<div style="left:600.80px;top:86.80px;width:8.60px;height:8.40px;background:#e0e0e0;border-radius:2px"></div>
<div style="left:578.10px;top:110.85px;width:7.80px;height:0.90px;background:#a8a8a8"></div>
<div class="t" style="left:582.79px;top:106.00px;font-size:4.429px;line-height:4.429px;color:#9a9a9a;font-family:'Liberation Sans';transform:scaleX(1.2210);-webkit-text-stroke-width:0">0</div>
<div style="left:578.10px;top:157.95px;width:7.80px;height:0.90px;background:#a8a8a8"></div>
<div class="t" style="left:578.06px;top:153.00px;font-size:4.429px;line-height:4.429px;color:#9a9a9a;font-family:'Liberation Sans';transform:scaleX(1.2210);-webkit-text-stroke-width:0">-12</div>
<div style="left:578.10px;top:205.05px;width:7.80px;height:0.90px;background:#a8a8a8"></div>
<div class="t" style="left:580.17px;top:200.00px;font-size:4.429px;line-height:4.429px;color:#9a9a9a;font-family:'Liberation Sans';transform:scaleX(1.2210);-webkit-text-stroke-width:0">-∞</div>
<div style="left:609.00px;top:104.60px;width:7.50px;height:101.40px;background:#2e2e2e;border-radius:3.75px;box-shadow:inset 0 0 0 1px #5c5c5c"></div>
<div style="left:609.00px;top:124.60px;width:7.50px;height:81.40px;background:#9b9b9b;border-radius:0 0 3.75px 3.75px;box-shadow:inset 0 0 0 0.8px #ababab"></div>
<div style="left:607.20px;top:118.60px;width:12.00px;height:12.00px;background:#dedede;border-radius:3px"></div>
<div style="left:588.90px;top:215.30px;width:31.90px;height:9.60px;border-radius:3px;box-shadow:inset 0 0 0 1px #8a8a8a"></div>
<div style="left:605.10px;top:216.00px;width:15.00px;height:8.20px;background:#a3a3a3;border-radius:0 2.5px 2.5px 0"></div>
<div class="t" style="left:611.57px;top:218.00px;font-size:5.200px;line-height:5.200px;color:#454545;font-family:'Liberation Sans';transform:scaleX(0.9500);-webkit-text-stroke-width:0.1px">0</div>
<div style="left:588.90px;top:228.30px;width:31.90px;height:9.30px;border-radius:3px;box-shadow:inset 0 0 0 1px #8a8a8a"></div>
<div style="left:605.10px;top:228.30px;width:0.90px;height:9.30px;background:#8a8a8a"></div>
<div class="t" style="left:593.66px;top:231.00px;font-size:5.942px;line-height:5.942px;color:#e6e6e6;font-family:'Liberation Sans';transform:scaleX(1.3564);-webkit-text-stroke-width:0.05px">M</div>
<div class="t" style="left:610.22px;top:231.00px;font-size:5.942px;line-height:5.942px;color:#e6e6e6;font-family:'Liberation Sans';transform:scaleX(1.3564);-webkit-text-stroke-width:0.05px">S</div>
<div class="t" style="left:593.49px;top:239.00px;font-size:7.310px;line-height:7.310px;color:#e6e6e6;font-family:'Liberation Sans';transform:scaleX(0.9456);-webkit-text-stroke-width:0.08px">ADAT 2</div>
<div style="left:636.70px;top:67.80px;width:63.20px;height:14.90px;background:#333"></div>
<div class="t" style="left:657.09px;top:72.00px;font-size:6.897px;line-height:6.897px;color:#e4e4e4;font-family:'Liberation Sans';transform:scaleX(1.0174);-webkit-text-stroke-width:0.08px">Shaker</div>
<div style="left:636.70px;top:82.50px;width:63.20px;height:167.50px;background:#000"></div>
<div style="left:656.30px;top:88.60px;width:24.00px;height:5.10px;border-radius:2.55px;box-shadow:inset 0 0 0 0.9px #9a9a9a"></div>
<div style="left:664.00px;top:86.80px;width:8.60px;height:8.40px;background:#e0e0e0;border-radius:2px"></div>
<div style="left:641.30px;top:110.85px;width:7.80px;height:0.90px;background:#a8a8a8"></div>
<div class="t" style="left:645.99px;top:106.00px;font-size:4.429px;line-height:4.429px;color:#9a9a9a;font-family:'Liberation Sans';transform:scaleX(1.2210);-webkit-text-stroke-width:0">0</div>
<div style="left:641.30px;top:157.95px;width:7.80px;height:0.90px;background:#a8a8a8"></div>
<div class="t" style="left:641.26px;top:153.00px;font-size:4.429px;line-height:4.429px;color:#9a9a9a;font-family:'Liberation Sans';transform:scaleX(1.2210);-webkit-text-stroke-width:0">-12</div>
<div style="left:641.30px;top:205.05px;width:7.80px;height:0.90px;background:#a8a8a8"></div>
<div class="t" style="left:643.37px;top:200.00px;font-size:4.429px;line-height:4.429px;color:#9a9a9a;font-family:'Liberation Sans';transform:scaleX(1.2210);-webkit-text-stroke-width:0">-∞</div>
<div style="left:672.20px;top:104.60px;width:7.50px;height:101.40px;background:#2e2e2e;border-radius:3.75px;box-shadow:inset 0 0 0 1px #5c5c5c"></div>
<div style="left:672.20px;top:124.40px;width:7.50px;height:81.60px;background:#9b9b9b;border-radius:0 0 3.75px 3.75px;box-shadow:inset 0 0 0 0.8px #ababab"></div>
<div style="left:670.40px;top:118.40px;width:12.00px;height:12.00px;background:#dedede;border-radius:3px"></div>
<div style="left:652.10px;top:215.30px;width:31.90px;height:9.60px;border-radius:3px;box-shadow:inset 0 0 0 1px #8a8a8a"></div>
<div style="left:668.30px;top:216.00px;width:15.00px;height:8.20px;background:#a3a3a3;border-radius:0 2.5px 2.5px 0"></div>
<div class="t" style="left:674.77px;top:218.00px;font-size:5.200px;line-height:5.200px;color:#454545;font-family:'Liberation Sans';transform:scaleX(0.9500);-webkit-text-stroke-width:0.1px">0</div>
<div style="left:652.10px;top:228.30px;width:31.90px;height:9.30px;border-radius:3px;box-shadow:inset 0 0 0 1px #8a8a8a"></div>
<div style="left:668.30px;top:228.30px;width:0.90px;height:9.30px;background:#8a8a8a"></div>
<div class="t" style="left:656.86px;top:231.00px;font-size:5.942px;line-height:5.942px;color:#e6e6e6;font-family:'Liberation Sans';transform:scaleX(1.3564);-webkit-text-stroke-width:0.05px">M</div>
<div class="t" style="left:673.42px;top:231.00px;font-size:5.942px;line-height:5.942px;color:#e6e6e6;font-family:'Liberation Sans';transform:scaleX(1.3564);-webkit-text-stroke-width:0.05px">S</div>
<div class="t" style="left:656.65px;top:239.00px;font-size:7.310px;line-height:7.310px;color:#e6e6e6;font-family:'Liberation Sans';transform:scaleX(0.9456);-webkit-text-stroke-width:0.08px">ADAT 3</div>
<div style="left:257.00px;top:67.80px;width:1.00px;height:181.20px;background:#3c3c3c"></div>
<div style="left:320.20px;top:67.80px;width:1.00px;height:181.20px;background:#3c3c3c"></div>
<div style="left:383.40px;top:67.80px;width:1.00px;height:181.20px;background:#3c3c3c"></div>
<div style="left:446.60px;top:67.80px;width:1.00px;height:181.20px;background:#3c3c3c"></div>
<div style="left:509.80px;top:67.80px;width:1.00px;height:181.20px;background:#3c3c3c"></div>
<div style="left:573.00px;top:67.80px;width:1.00px;height:181.20px;background:#3c3c3c"></div>
<div style="left:636.20px;top:67.80px;width:1.00px;height:181.20px;background:#3c3c3c"></div>
<div style="left:194.10px;top:67.80px;width:520.00px;height:182.00px;border:1px solid #4a4a4a;border-radius:7px 0 0 7px"></div>
</div>
<div style="left:195.40px;top:251.10px;width:408.00px;height:3.90px;background:#e8e8e8;border-radius:2px"></div>
<div style="left:193.90px;top:271.30px;width:150.70px;height:182.20px;border-radius:7px;background:#282828;box-shadow:inset 0 0 0 1px #474747"></div>
<div style="left:0;top:0;width:720px;height:515px;clip-path:inset(271.3px 399px 62px 194.3px round 7px 0 0 7px)">
<div style="left:194.30px;top:271.20px;width:63.20px;height:14.90px;background:#333"></div>
<div class="t" style="left:217.32px;top:276.00px;font-size:6.897px;line-height:6.897px;color:#e4e4e4;font-family:'Liberation Sans';transform:scaleX(1.0174);-webkit-text-stroke-width:0.08px">Logic</div>
<svg style="left:246.90px;top:276.30px" width="6.3" height="5.8" viewBox="0 0 6.3 5.8"><path d="M0.3 0.3 L6 5.5 M6 0.3 L0.3 5.5" stroke="#e0e0e0" stroke-width="1.05"/></svg>
<div style="left:194.30px;top:285.90px;width:63.20px;height:167.50px;background:#000"></div>
<div style="left:213.90px;top:292.00px;width:24.00px;height:5.10px;border-radius:2.55px;box-shadow:inset 0 0 0 0.9px #9a9a9a"></div>
<div style="left:221.60px;top:290.20px;width:8.60px;height:8.40px;background:#e0e0e0;border-radius:2px"></div>
<div style="left:198.40px;top:314.25px;width:7.80px;height:0.90px;background:#a8a8a8"></div>
<div class="t" style="left:203.09px;top:309.00px;font-size:4.429px;line-height:4.429px;color:#9a9a9a;font-family:'Liberation Sans';transform:scaleX(1.2210);-webkit-text-stroke-width:0">0</div>
<div style="left:198.40px;top:361.35px;width:7.80px;height:0.90px;background:#a8a8a8"></div>
<div class="t" style="left:198.36px;top:356.00px;font-size:4.429px;line-height:4.429px;color:#9a9a9a;font-family:'Liberation Sans';transform:scaleX(1.2210);-webkit-text-stroke-width:0">-12</div>
<div style="left:198.40px;top:408.45px;width:7.80px;height:0.90px;background:#a8a8a8"></div>
<div class="t" style="left:200.47px;top:403.00px;font-size:4.429px;line-height:4.429px;color:#9a9a9a;font-family:'Liberation Sans';transform:scaleX(1.2210);-webkit-text-stroke-width:0">-∞</div>
<div style="left:244.30px;top:314.25px;width:7.80px;height:0.90px;background:#a8a8a8"></div>
<div class="t" style="left:248.99px;top:309.00px;font-size:4.429px;line-height:4.429px;color:#9a9a9a;font-family:'Liberation Sans';transform:scaleX(1.2210);-webkit-text-stroke-width:0">0</div>
<div style="left:244.30px;top:361.35px;width:7.80px;height:0.90px;background:#a8a8a8"></div>
<div class="t" style="left:244.26px;top:356.00px;font-size:4.429px;line-height:4.429px;color:#9a9a9a;font-family:'Liberation Sans';transform:scaleX(1.2210);-webkit-text-stroke-width:0">-12</div>
<div style="left:244.30px;top:408.45px;width:7.80px;height:0.90px;background:#a8a8a8"></div>
<div class="t" style="left:246.37px;top:403.00px;font-size:4.429px;line-height:4.429px;color:#9a9a9a;font-family:'Liberation Sans';transform:scaleX(1.2210);-webkit-text-stroke-width:0">-∞</div>
<div style="left:222.30px;top:308.00px;width:7.50px;height:101.40px;background:#2e2e2e;border-radius:3.75px;box-shadow:inset 0 0 0 1px #5c5c5c"></div>
<div style="left:222.30px;top:328.30px;width:7.50px;height:81.10px;background:#9b9b9b;border-radius:0 0 3.75px 3.75px;box-shadow:inset 0 0 0 0.8px #ababab"></div>
<div style="left:209.90px;top:366.80px;width:5.3px;height:42.10px;overflow:hidden;border-radius:0 0 2.6px 2.6px"><div style="left:0;top:-41.90px;width:5.3px;height:84px;background:linear-gradient(#efa03c 0px,#e8b43e 5px,#d2cc44 12px,#9ade52 20px,#48ec6c 28px,#22f07c 36px,#1ef08a 64px,#1ee0a8 84px)"></div></div>
<div style="left:235.50px;top:384.30px;width:5.3px;height:24.60px;overflow:hidden;border-radius:0 0 2.6px 2.6px"><div style="left:0;top:-59.40px;width:5.3px;height:84px;background:linear-gradient(#efa03c 0px,#e8b43e 5px,#d2cc44 12px,#9ade52 20px,#48ec6c 28px,#22f07c 36px,#1ef08a 64px,#1ee0a8 84px)"></div></div>
<div style="left:219.90px;top:322.30px;width:12.00px;height:12.00px;background:#dedede;border-radius:3px"></div>
<div style="left:201.50px;top:418.70px;width:48.00px;height:9.60px;border-radius:3px;box-shadow:inset 0 0 0 1px #8a8a8a"></div>
<div class="t" style="left:204.34px;top:421.00px;font-size:5.200px;line-height:5.200px;color:#dcdcdc;font-family:'Liberation Sans';transform:scaleX(0.8936);-webkit-text-stroke-width:0.1px">-14.8</div>
<div style="left:217.80px;top:419.40px;width:15.30px;height:8.20px;background:#a3a3a3"></div>
<div class="t" style="left:224.07px;top:421.00px;font-size:5.200px;line-height:5.200px;color:#454545;font-family:'Liberation Sans';transform:scaleX(0.9500);-webkit-text-stroke-width:0.1px">0</div>
<div class="t" style="left:235.99px;top:421.00px;font-size:5.200px;line-height:5.200px;color:#dcdcdc;font-family:'Liberation Sans';transform:scaleX(0.8936);-webkit-text-stroke-width:0.1px">-26.3</div>
<div style="left:209.70px;top:431.70px;width:31.90px;height:9.30px;border-radius:3px;box-shadow:inset 0 0 0 1px #8a8a8a"></div>
<div style="left:225.90px;top:431.70px;width:0.90px;height:9.30px;background:#8a8a8a"></div>
<div class="t" style="left:214.46px;top:434.00px;font-size:5.942px;line-height:5.942px;color:#e6e6e6;font-family:'Liberation Sans';transform:scaleX(1.3564);-webkit-text-stroke-width:0.05px">M</div>
<div class="t" style="left:231.02px;top:434.00px;font-size:5.942px;line-height:5.942px;color:#e6e6e6;font-family:'Liberation Sans';transform:scaleX(1.3564);-webkit-text-stroke-width:0.05px">S</div>
<div class="t" style="left:205.82px;top:443.00px;font-size:7.310px;line-height:7.310px;color:#e6e6e6;font-family:'Liberation Sans';transform:scaleX(0.9456);-webkit-text-stroke-width:0.08px">Playback 1-2</div>
<div style="left:257.50px;top:271.20px;width:63.20px;height:14.90px;background:#333"></div>
<div class="t" style="left:281.33px;top:276.00px;font-size:6.897px;line-height:6.897px;color:#e4e4e4;font-family:'Liberation Sans';transform:scaleX(1.0174);-webkit-text-stroke-width:0.08px">Click</div>
<svg style="left:310.10px;top:276.30px" width="6.3" height="5.8" viewBox="0 0 6.3 5.8"><path d="M0.3 0.3 L6 5.5 M6 0.3 L0.3 5.5" stroke="#e0e0e0" stroke-width="1.05"/></svg>
<div style="left:257.50px;top:285.90px;width:63.20px;height:167.50px;background:#000"></div>
<div style="left:277.10px;top:292.00px;width:24.00px;height:5.10px;border-radius:2.55px;box-shadow:inset 0 0 0 0.9px #9a9a9a"></div>
<div style="left:284.80px;top:290.20px;width:8.60px;height:8.40px;background:#e0e0e0;border-radius:2px"></div>
<div style="left:261.60px;top:314.25px;width:7.80px;height:0.90px;background:#a8a8a8"></div>
<div class="t" style="left:266.29px;top:309.00px;font-size:4.429px;line-height:4.429px;color:#9a9a9a;font-family:'Liberation Sans';transform:scaleX(1.2210);-webkit-text-stroke-width:0">0</div>
<div style="left:261.60px;top:361.35px;width:7.80px;height:0.90px;background:#a8a8a8"></div>
<div class="t" style="left:261.56px;top:356.00px;font-size:4.429px;line-height:4.429px;color:#9a9a9a;font-family:'Liberation Sans';transform:scaleX(1.2210);-webkit-text-stroke-width:0">-12</div>
<div style="left:261.60px;top:408.45px;width:7.80px;height:0.90px;background:#a8a8a8"></div>
<div class="t" style="left:263.67px;top:403.00px;font-size:4.429px;line-height:4.429px;color:#9a9a9a;font-family:'Liberation Sans';transform:scaleX(1.2210);-webkit-text-stroke-width:0">-∞</div>
<div style="left:307.50px;top:314.25px;width:7.80px;height:0.90px;background:#a8a8a8"></div>
<div class="t" style="left:312.19px;top:309.00px;font-size:4.429px;line-height:4.429px;color:#9a9a9a;font-family:'Liberation Sans';transform:scaleX(1.2210);-webkit-text-stroke-width:0">0</div>
<div style="left:307.50px;top:361.35px;width:7.80px;height:0.90px;background:#a8a8a8"></div>
<div class="t" style="left:307.46px;top:356.00px;font-size:4.429px;line-height:4.429px;color:#9a9a9a;font-family:'Liberation Sans';transform:scaleX(1.2210);-webkit-text-stroke-width:0">-12</div>
<div style="left:307.50px;top:408.45px;width:7.80px;height:0.90px;background:#a8a8a8"></div>
<div class="t" style="left:309.57px;top:403.00px;font-size:4.429px;line-height:4.429px;color:#9a9a9a;font-family:'Liberation Sans';transform:scaleX(1.2210);-webkit-text-stroke-width:0">-∞</div>
<div style="left:285.50px;top:308.00px;width:7.50px;height:101.40px;background:#2e2e2e;border-radius:3.75px;box-shadow:inset 0 0 0 1px #5c5c5c"></div>
<div style="left:285.50px;top:328.10px;width:7.50px;height:81.30px;background:#9b9b9b;border-radius:0 0 3.75px 3.75px;box-shadow:inset 0 0 0 0.8px #ababab"></div>
<div style="left:273.10px;top:396.70px;width:5.3px;height:12.20px;overflow:hidden;border-radius:0 0 2.6px 2.6px"><div style="left:0;top:-71.80px;width:5.3px;height:84px;background:linear-gradient(#efa03c 0px,#e8b43e 5px,#d2cc44 12px,#9ade52 20px,#48ec6c 28px,#22f07c 36px,#1ef08a 64px,#1ee0a8 84px)"></div></div>
<div style="left:298.70px;top:378.00px;width:5.3px;height:30.90px;overflow:hidden;border-radius:0 0 2.6px 2.6px"><div style="left:0;top:-53.10px;width:5.3px;height:84px;background:linear-gradient(#efa03c 0px,#e8b43e 5px,#d2cc44 12px,#9ade52 20px,#48ec6c 28px,#22f07c 36px,#1ef08a 64px,#1ee0a8 84px)"></div></div>
<div style="left:283.10px;top:322.10px;width:12.00px;height:12.00px;background:#dedede;border-radius:3px"></div>
<div style="left:264.70px;top:418.70px;width:48.00px;height:9.60px;border-radius:3px;box-shadow:inset 0 0 0 1px #8a8a8a"></div>
<div class="t" style="left:267.54px;top:421.00px;font-size:5.200px;line-height:5.200px;color:#dcdcdc;font-family:'Liberation Sans';transform:scaleX(0.8936);-webkit-text-stroke-width:0.1px">-33.8</div>
<div style="left:281.00px;top:419.40px;width:15.30px;height:8.20px;background:#a3a3a3"></div>
<div class="t" style="left:287.27px;top:421.00px;font-size:5.200px;line-height:5.200px;color:#454545;font-family:'Liberation Sans';transform:scaleX(0.9500);-webkit-text-stroke-width:0.1px">0</div>
<div class="t" style="left:299.19px;top:421.00px;font-size:5.200px;line-height:5.200px;color:#dcdcdc;font-family:'Liberation Sans';transform:scaleX(0.8977);-webkit-text-stroke-width:0.1px">-22.2</div>
<div style="left:272.90px;top:431.70px;width:31.90px;height:9.30px;border-radius:3px;box-shadow:inset 0 0 0 1px #8a8a8a"></div>
<div style="left:289.10px;top:431.70px;width:0.90px;height:9.30px;background:#8a8a8a"></div>
<div class="t" style="left:277.66px;top:434.00px;font-size:5.942px;line-height:5.942px;color:#e6e6e6;font-family:'Liberation Sans';transform:scaleX(1.3564);-webkit-text-stroke-width:0.05px">M</div>
<div class="t" style="left:294.22px;top:434.00px;font-size:5.942px;line-height:5.942px;color:#e6e6e6;font-family:'Liberation Sans';transform:scaleX(1.3564);-webkit-text-stroke-width:0.05px">S</div>
<div class="t" style="left:268.95px;top:443.00px;font-size:7.310px;line-height:7.310px;color:#e6e6e6;font-family:'Liberation Sans';transform:scaleX(0.9456);-webkit-text-stroke-width:0.08px">Playback 3-4</div>
<div style="left:257.00px;top:271.30px;width:1.00px;height:182.00px;background:#3c3c3c"></div>
<div style="left:320.20px;top:271.30px;width:1.00px;height:182.00px;background:#3c3c3c"></div>
</div>
<div style="left:193.90px;top:271.30px;width:150.70px;height:182.20px;border-radius:7px;border:1px solid #4a4a4a"></div>
<svg style="left:328px;top:357.5px" width="9" height="9" viewBox="0 0 9 9"><path d="M4.5 2 V7 M2 4.5 H7" stroke="#7a7a7a" stroke-width="0.7"/></svg>
</body></html>
